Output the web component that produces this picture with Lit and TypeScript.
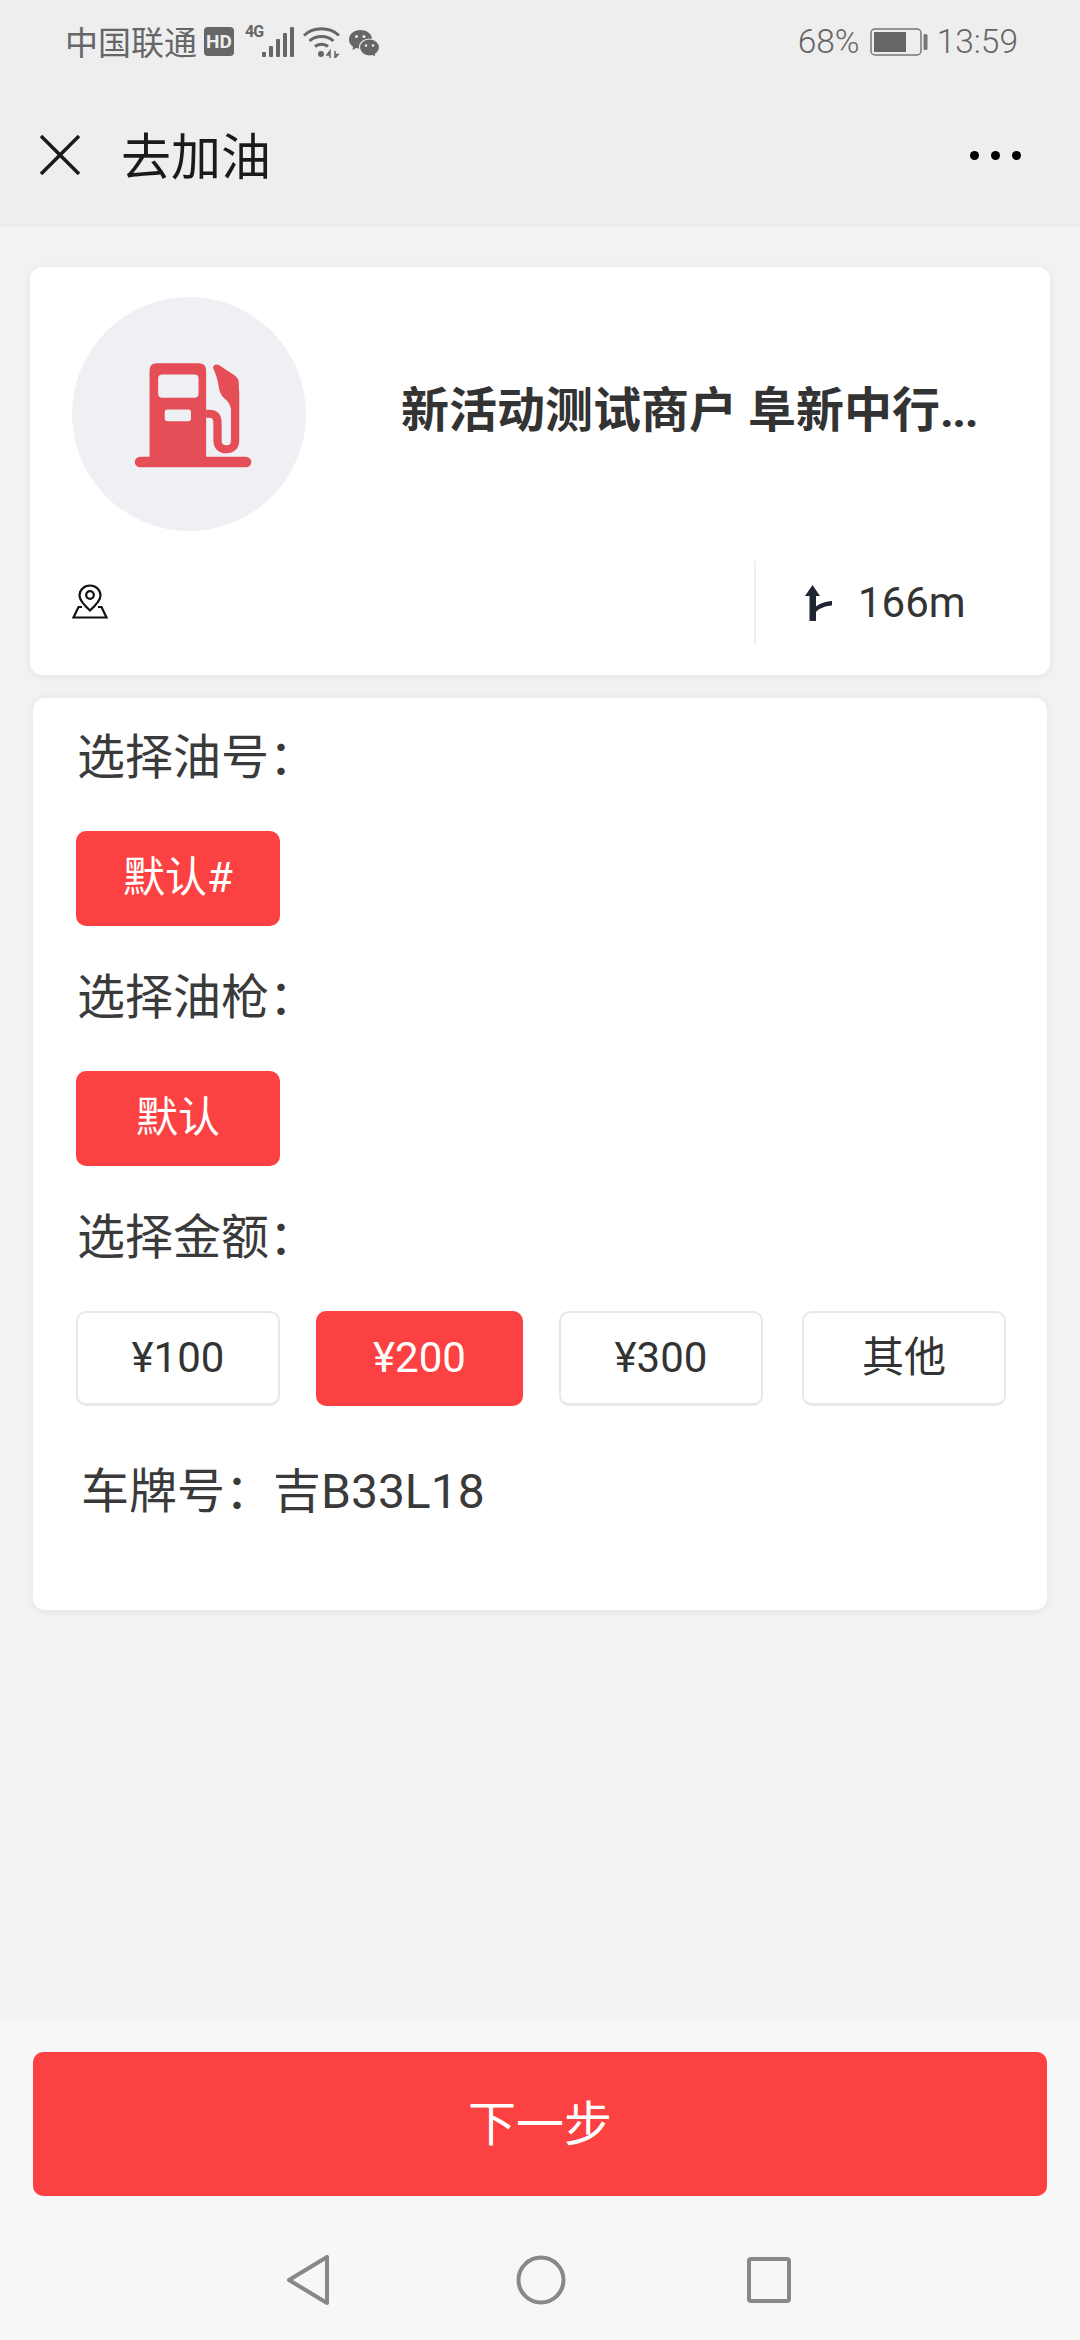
import { LitElement, html, css } from "lit";
import { customElement } from "lit/decorators.js";

@customElement("app-root")
export class AppRoot extends LitElement {
  static styles = css`
    :host { display: block; width: 1080px; height: 2340px; font-family: "Noto Sans CJK SC", Roboto, sans-serif; color: #333; }
    * { box-sizing: border-box; }
    .page { width: 1080px; height: 2340px; display: flex; flex-direction: column; background: #f2f2f2; overflow: hidden; }
    .status { height: 86px; background: #eee; display: flex; align-items: center; padding: 0 62px 0 65px; color: #666; font-size: 33px; }
    .status .num { font-family: Roboto, sans-serif; font-size: 33.500px; font-weight: 300; line-height: 1; padding-bottom: 2px; }
    .status svg { display: block; flex: none; }
    .carrier { line-height: 1; margin-right: 7px; padding-bottom: 4px; }
    .hd { width: 30px; height: 29px; border-radius: 4px; background: #666; color: #eee; font: 700 19px/29px Roboto, sans-serif; text-align: center; margin-right: 11px; margin-bottom: 3px; }
    .net { font: 700 16px/16px Roboto, sans-serif; align-self: flex-start; margin-top: 24px; width: 17px; letter-spacing: -1px; }
    .sig { margin-right: 9px; margin-bottom: 2px; }
    .wifi { margin-right: 8px; margin-bottom: 2px; }
    .spacer { flex: 1; }
    .batt { margin: 0 9px 2px 10px; }
    .nav { height: 140px; background: #eee; border-bottom: 2px solid #eaeaea; display: flex; align-items: center; padding: 0 60px 0 40px; }
    .nav h1 { flex: 1; margin: 0 0 4px 41px; font-size: 50px; font-weight: 400; color: #1a1a1a; line-height: 1; }
    .more { display: flex; gap: 12px; margin-right: -1px; }
    .more i { width: 9px; height: 9px; border-radius: 50%; background: #000; }
    .main { flex: 1; padding-top: 41px; display: flex; flex-direction: column; align-items: center; gap: 23px; }
    .card { background: #fff; border-radius: 12px; box-shadow: 0 1px 8px rgba(0,0,0,.07); }
    .shop { width: 1020px; height: 408px; padding: 30px 0 0 42px; }
    .top { display: flex; align-items: center; }
    .circle { width: 234px; height: 234px; border-radius: 50%; background: #eff0f4; display: flex; align-items: center; justify-content: center; padding-left: 6px; }
    .name { margin: 0 0 12px 95px; font-size: 48px; font-weight: 700; line-height: 1; white-space: nowrap; color: #333; }
    .name span { font-family: Roboto, sans-serif; letter-spacing: -1.500px; }
    .meta { display: flex; align-items: center; height: 84px; margin-top: 30px; }
    .addr { width: 682px; display: flex; align-items: center; padding-bottom: 3px; }
    .divider { width: 2px; height: 84px; background: #f0f0f0; }
    .dist { display: flex; align-items: center; margin-left: 49px; font: 400 42px/1 Roboto, sans-serif; color: #333; }
    .dist svg { margin-right: 26px; }
    .form { width: 1014px; height: 912px; padding: 14px 0 0 43px; }
    .label { height: 90px; line-height: 82px; font-size: 48px; padding-left: 1px; font-weight: 400; color: #3a3a3a; }
    .opts { display: flex; margin: 29px 0 26px; }
    .opt { width: 204px; height: 95px; border: 2px solid #e8e8e8; border-bottom-width: 3px; border-radius: 10px; display: flex; align-items: center; justify-content: center; font-size: 42px; line-height: 1; color: #333; font-family: Roboto, "Noto Sans CJK SC", sans-serif; margin-right: 36px; }
    .opt.on { background: #fb4141; border-color: #fb4141; color: #fff; }
    .opts.amt .opt:nth-child(2) { width: 207px; }
    .opts.amt .opt:nth-child(3) { margin-right: 39px; }
    .plate { margin: 56px 0 0 5px; font-size: 48px; line-height: 60px; color: #3a3a3a; font-family: Roboto, "Noto Sans CJK SC", sans-serif; }
    .foot { height: 321px; background: #f7f7f7; padding-top: 33px; display: flex; flex-direction: column; align-items: center; }
    .next { width: 1014px; height: 144px; background: #fb4141; border-radius: 10px; color: #fff; font-size: 48px; line-height: 1; padding-bottom: 8px; display: flex; align-items: center; justify-content: center; }
    .sys { flex: 1; width: 100%; display: flex; align-items: flex-start; padding: 59px 0 0 286px; }
    .sys svg { display: block; flex: none; }
    .home { margin-left: 186px; }
    .recent { margin-left: 181px; margin-top: 2px; }
  `;

  private option(text: string, on = false) {
    return html`<div class="opt ${on ? "on" : ""}">${text}</div>`;
  }

  render() {
    return html`
      <div class="page">
        <div class="status">
          <span class="carrier">中国联通</span>
          <div class="hd">HD</div>
          <div class="net">4G</div>
          <svg class="sig" width="32" height="30" viewBox="0 0 32 30" fill="#666">
            <rect x="0" y="25" width="4" height="5" rx="1"/><rect x="7" y="19" width="4" height="11" rx="1"/>
            <rect x="14" y="12" width="4" height="18" rx="1"/><rect x="21" y="6" width="4" height="24" rx="1"/><rect x="28" y="0" width="4" height="30" rx="1"/>
          </svg>
          <svg class="wifi" width="37" height="31" viewBox="0 0 37 31" fill="none" stroke="#666" stroke-width="3">
            <path d="M1 8.500C10.500 -.5 26.500 -.5 36 8.500"/><path d="M6.500 14C13 8 24 8 30.500 14"/><path d="M12 19.500C15.500 16.500 21.500 16.500 25 19.500"/>
            <circle cx="18" cy="27" r="3" fill="#666" stroke="none"/>
            <path d="M27 31V24l-3 4h3M32 24v7l3-3.500h-3" stroke-width="1.500"/>
          </svg>
          <svg width="32" height="29" viewBox="0 0 32 29">
            <path d="M12.500 1C6 1 1 5 1 10.500c0 3 1.500 5.500 4 7.200L4.500 21l3.500-2c1.400.4 3 .6 4.500.6C19 19.600 24 15.500 24 10.300 24 5 19 1 12.500 1z" fill="#666"/>
            <path d="M21.500 10C15.500 10 11.500 14 11.500 18.500S15.500 27 21.500 27c1 0 2-.1 3-.4L28 28.500l-.6-3.300C29.700 23.600 31.500 21.200 31.500 18.500 31.500 14 27.500 10 21.500 10z" fill="#666" stroke="#eee" stroke-width="1.200"/>
            <circle cx="8.500" cy="7.500" r="1.500" fill="#eee"/><circle cx="16" cy="7.500" r="1.500" fill="#eee"/>
            <circle cx="18" cy="16.500" r="1.300" fill="#eee"/><circle cx="25" cy="16.500" r="1.300" fill="#eee"/>
          </svg>
          <div class="spacer"></div>
          <span class="num">68%</span>
          <svg class="batt" width="58" height="28" viewBox="0 0 58 28">
            <rect x="1" y="1" width="50" height="26" rx="4" fill="none" stroke="#777" stroke-width="1.500"/>
            <rect x="4" y="4" width="32" height="20" fill="#666"/>
            <rect x="53.500" y="6" width="4" height="16" rx="1.500" fill="#777"/>
          </svg>
          <span class="num">13:59</span>
        </div>
        <div class="nav">
          <svg width="40" height="40" viewBox="0 0 40 40" stroke="#1a1a1a" stroke-width="3.500"><path d="M1 1l38 38M39 1L1 39"/></svg>
          <h1>去加油</h1>
          <div class="more"><i></i><i></i><i></i></div>
        </div>
        <div class="main">
          <div class="card shop">
            <div class="top">
              <div class="circle">
                <svg width="119" height="107" viewBox="385 330 345 320" preserveAspectRatio="none">
                  <path fill="#e54d57" fill-rule="evenodd" d="M433 620V358q0-21 21-21H576q21 0 21 21V620zM458 382v46q0 12 12 12H563q12 0 12-12V382q0-12-12-12H470q-12 0-12 12zM477 483v19q0 8 8 8H545q8 0 8-8V483q0-8-8-8H485q-8 0-8 8z"/>
                  <rect x="390" y="616" width="338" height="32" rx="16" fill="#e54d57"/>
                  <path fill="none" stroke="#e54d57" stroke-width="24" d="M597 488H606Q630 488 630 516V566Q630 594 656 594 681 594 681 566V420"/>
                  <path fill="#e54d57" d="M617 350Q620 336 634 342L678 372Q692 381 692 398V480L668 470Q664 452 650 442 636 430 633 404 630 380 617 350z"/>
                </svg>
              </div>
              <div class="name">新活动测试商户 阜新中行<span>...</span></div>
            </div>
            <div class="meta">
              <div class="addr">
                <svg width="36" height="35" viewBox="0 0 36 35" fill="none" stroke="#111" stroke-width="2.200">
                  <path d="M18 1.500C12 1.500 7.500 6 7.500 11.500c0 5 5 10 10.500 15 5.500-5 10.500-10 10.500-15C28.500 6 24 1.500 18 1.500z"/>
                  <circle cx="18" cy="11" r="3.800"/>
                  <path d="M10 23H6.500L1.500 33.500H34.500L29.500 23H26"/>
                </svg>
              </div>
              <div class="divider"></div>
              <div class="dist">
                <svg width="27" height="36" viewBox="0 0 27 36" fill="#1f2533">
                  <path d="M7.500 0L0 11H4.500V36H11V27C14 23.500 20 21 27 20.500V16C20 16.500 14 19 11 21.500V11H15z"/>
                </svg>
                166m
              </div>
            </div>
          </div>
          <div class="card form">
            <div class="label">选择油号：</div>
            <div class="opts">${this.option("默认#", true)}</div>
            <div class="label">选择油枪：</div>
            <div class="opts">${this.option("默认", true)}</div>
            <div class="label">选择金额：</div>
            <div class="opts amt">
              ${this.option("¥100")}${this.option("¥200", true)}${this.option("¥300")}${this.option("其他")}
            </div>
            <div class="plate">车牌号：吉B33L18</div>
          </div>
        </div>
        <div class="foot">
          <div class="next">下一步</div>
          <div class="sys">
            <svg width="44" height="50" viewBox="0 0 44 50" fill="none" stroke="#888" stroke-width="4" stroke-linejoin="round"><path d="M3 25L41 2V48z"/></svg>
            <svg class="home" width="50" height="50" viewBox="0 0 50 50" fill="none" stroke="#888" stroke-width="4"><circle cx="25" cy="25" r="22.500"/></svg>
            <svg class="recent" width="44" height="46" viewBox="0 0 44 46" fill="none" stroke="#888" stroke-width="4" stroke-linejoin="round"><rect x="2" y="2" width="40" height="42" rx="2"/></svg>
          </div>
        </div>
      </div>
    `;
  }
}
